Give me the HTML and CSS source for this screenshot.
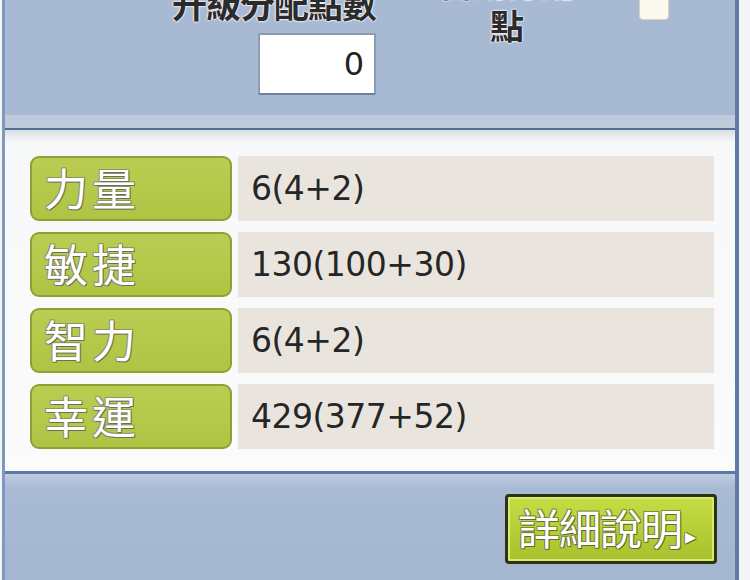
FILE: index.html
```html
<!DOCTYPE html>
<html lang="zh-Hant">
<head>
  <meta charset="UTF-8" />
  <title>能力值</title>
  <link rel="stylesheet" href="styles.css">
</head>
<body>
  <div class="window">
    <div class="top">
      <div class="points">
        <span class="points-label">升級分配點數</span>
        <div class="points-box">0</div>
      </div>
      <div class="auto">
        <span class="auto-label">自動分配<br>點</span>
      </div>
      <div class="check"></div>
    </div>

    <div class="stats">
      <div class="row">
        <div class="name">力量</div>
        <div class="value">6(4+2)</div>
      </div>
      <div class="row">
        <div class="name">敏捷</div>
        <div class="value">130(100+30)</div>
      </div>
      <div class="row">
        <div class="name">智力</div>
        <div class="value">6(4+2)</div>
      </div>
      <div class="row">
        <div class="name">幸運</div>
        <div class="value">429(377+52)</div>
      </div>
    </div>

    <div class="bottom">
      <button class="detail">詳細說明<span class="arrow">▸</span></button>
    </div>
  </div>
</body>
</html>
```

FILE: styles.css
```css
body {
  margin: 0;
  background: #f3f5f9;
  font-family: "Noto Sans CJK TC", sans-serif;
  overflow: hidden;
}

.window {
  width: 730px;
  height: 580px;
  margin-left: 2px;
  border-left: 3px solid #7f98bd;
  border-right: 4px solid #5d7ca8;
  background: #a8b9d3;
  display: flex;
  flex-direction: column;
}

/* upper part: free points and auto assign */
.top {
  height: 115px;
  display: flex;
  align-items: flex-start;
  border-bottom: 13px solid #bfcbdd;
  box-shadow: 0 2px 0 #4f6f99;
  position: relative;
  z-index: 1;
}

.points {
  margin-left: 155px;
  margin-top: -18px;
  display: flex;
  flex-direction: column;
  align-items: flex-end;
  width: 216px;
}

.points-label {
  font-size: 35px;
  line-height: 42px;
  font-weight: bold;
  color: #2b2b2b;
  text-shadow: 0 0 2px #fff, 0 0 2px #fff, 0 0 2px #fff;
  letter-spacing: -1px;
}

.points-box {
  margin-top: 9px;
  width: 118px;
  height: 62px;
  background: #fff;
  border: 2px solid #8a9bb4;
  border-bottom-color: #6c7f9c;
  border-radius: 2px;
  box-sizing: border-box;
  font-family: "DejaVu Sans", sans-serif;
  font-size: 32px;
  line-height: 58px;
  text-align: right;
  padding-right: 10px;
  color: #222;
}

.auto {
  margin-left: 56px;
  margin-top: -38px;
  width: 150px;
  text-align: center;
}

.auto-label {
  font-size: 34px;
  line-height: 42px;
  font-weight: bold;
  color: #2b2b2b;
  text-shadow: 0 0 2px #fff, 0 0 2px #fff, 0 0 2px #fff;
}

.check {
  margin-left: 57px;
  margin-top: -6px;
  width: 28px;
  height: 24px;
  background: #fbf9ee;
  border-radius: 4px;
  border: 1px solid #d9d6c6;
}

/* stat table */
.stats {
  background: linear-gradient(#d5d8dc, #f7f8f9 14px, #fbfbfb);
  padding: 28px 21px 22px 25px;
  display: flex;
  flex-direction: column;
  gap: 11px;
  border-bottom: 3px solid #5b7ba6;
}

.row {
  display: flex;
  gap: 6px;
  height: 65px;
}

.name {
  width: 202px;
  box-sizing: border-box;
  background: linear-gradient(#bacd52, #afc443);
  border: 2px solid #8f9f34;
  border-radius: 9px;
  color: #fff;
  font-size: 44px;
  line-height: 58px;
  padding-left: 12px;
  letter-spacing: 4px;
  text-shadow: 1px 1px 0 #6b6f55, -1px -1px 0 #8d9466, 1px -1px 0 #8d9466, -1px 1px 0 #8d9466;
}

.value {
  flex: 1;
  background: #e9e5de;
  font-family: "DejaVu Sans", sans-serif;
  font-size: 33px;
  line-height: 65px;
  padding-left: 13px;
  color: #262626;
  letter-spacing: -0.5px;
}

/* bottom bar with detail button */
.bottom {
  flex: 1;
  background: linear-gradient(#c0cce0, #a9bad4 14px, #a5b6d0);
  display: flex;
  justify-content: flex-end;
  align-items: flex-start;
  padding: 20px 18px 0 0;
}

.detail {
  width: 212px;
  height: 70px;
  border: 3px solid #2d3414;
  border-radius: 4px;
  background: linear-gradient(#c6dc44, #b4cc34 60%, #a8c02e);
  box-shadow: inset 0 0 0 2px #d9ea72;
  color: #fff;
  font-family: "Noto Sans CJK TC", sans-serif;
  font-size: 42px;
  line-height: 60px;
  padding: 0 0 0 10px;
  text-align: left;
  letter-spacing: -1px;
  text-shadow: 1px 1px 0 #5f6a2a, -1px -1px 0 #7e8a3c, 1px -1px 0 #7e8a3c, -1px 1px 0 #7e8a3c;
  cursor: pointer;
}

.arrow {
  font-size: 22px;
  margin-left: 3px;
  vertical-align: middle;
}
```
